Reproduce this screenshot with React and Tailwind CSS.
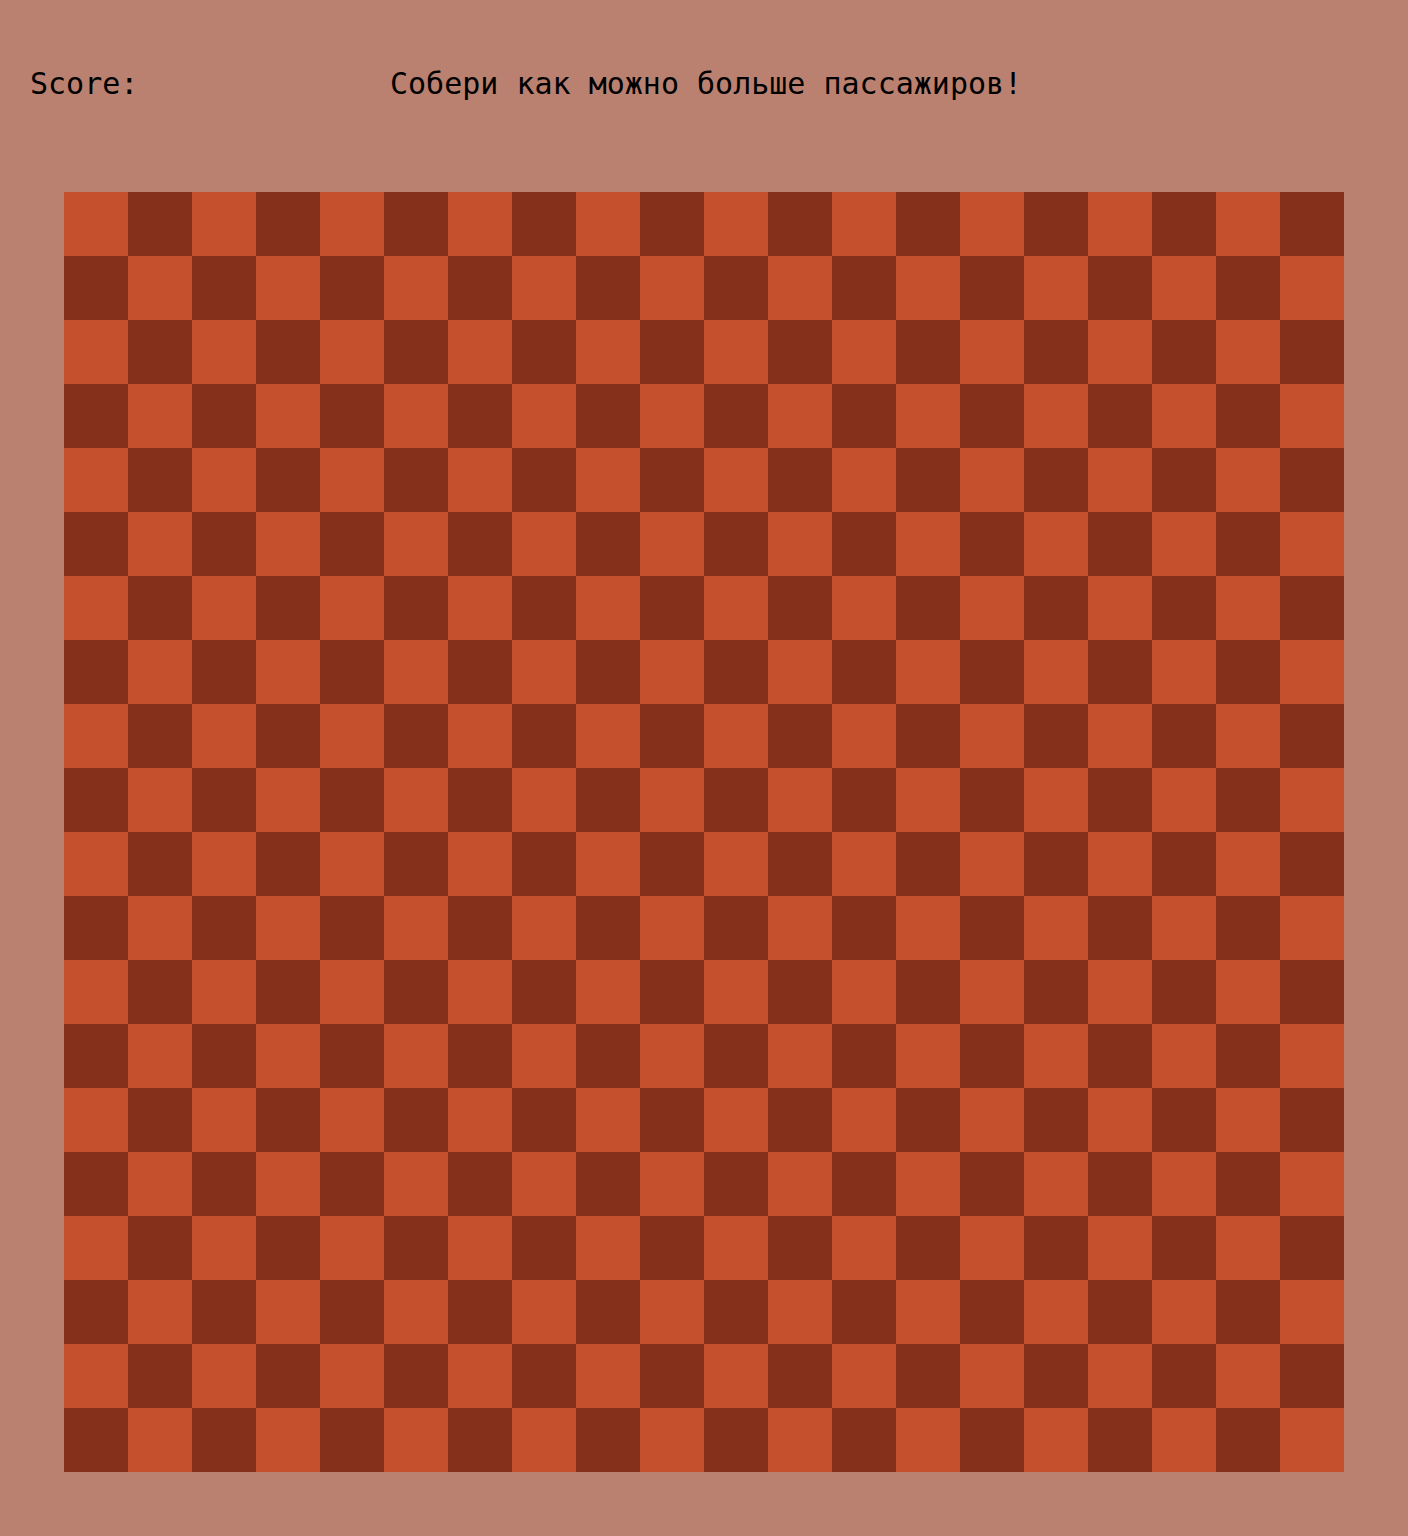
const SIZE = 20;

const cells = [];
for (let r = 0; r < SIZE; r++) {
  for (let c = 0; c < SIZE; c++) {
    cells.push((r + c) % 2 === 0);
  }
}

export default function App() {
  return (
    <div className="w-[1408px] h-[1536px] bg-[#ba8170] text-black" style={{ fontFamily: '"DejaVu Sans Mono", monospace' }}>
      {/* header */}
      <div className="h-[192px] pt-[66px] flex text-[30px] leading-[36px]">
        <div className="w-[390px] pl-[30px]">Score:</div>
        <div>Собери как можно больше пассажиров!</div>
      </div>

      {/* board */}
      <div className="ml-[64px] grid grid-cols-[repeat(20,64px)] w-[1280px]">
        {cells.map((light, i) => (
          <div key={i} className={light ? 'h-[64px] bg-[#c5502d]' : 'h-[64px] bg-[#84301b]'} />
        ))}
      </div>
    </div>
  );
}
